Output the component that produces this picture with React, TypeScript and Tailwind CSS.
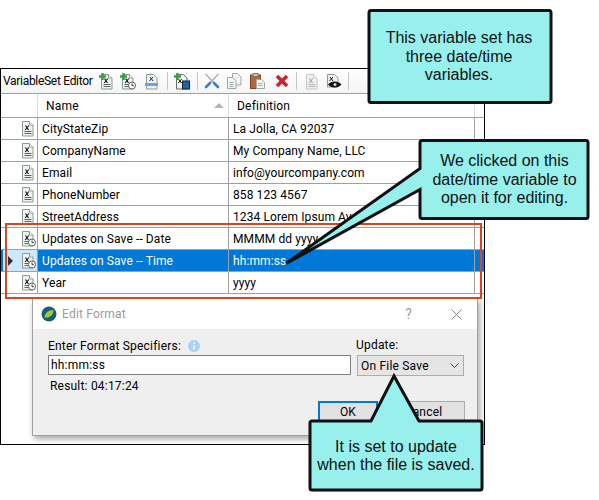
import React from "react";

const uiFont = "font-['Roboto','Noto_Sans',sans-serif]";

// Document glyph shared by the rows and the toolbar
function VarDoc({ clock = false, plus = false, faded = false }: { clock?: boolean; plus?: boolean; faded?: boolean }) {
  const line = faded ? "#b8b8b8" : "#5a6460";
  return (
    <svg width="16" height="17" viewBox="0 0 16 17" className="shrink-0">
      <path d="M2.5 1.5h7l3.500 3.500v11h-10.500z" fill={faded ? "#f0f0f0" : "#eef3f1"} stroke={faded ? "#c8c8c8" : "#8c9a96"} />
      <path d="M9.500 1.500v3.500h3.500" fill="#fff" stroke={faded ? "#c8c8c8" : "#8c9a96"} />
      <path d="M5.500 5.500l3 4.500M8.800 5.500l-3.600 4.500" stroke={faded ? "#aaa" : "#111"} strokeWidth="1.100" fill="none" />
      <path d="M4.500 11.500h7M4.500 13.500h7" stroke={line} />
      {clock && (
        <g>
          <circle cx="12" cy="12.500" r="3.500" fill="#fff" stroke="#5a6460" />
          <path d="M12 10.500v2.200h1.800" stroke="#333" fill="none" />
        </g>
      )}
      {plus && <path d="M3.500 0v7M0 3.500h7" stroke="#2fa53a" strokeWidth="2.400" />}
    </svg>
  );
}

function Sep() {
  return <div className="w-px h-[18px] bg-[#c4c4c4] shrink-0" />;
}

function Toolbar() {
  return (
    <div className="flex items-center h-[25px] bg-gradient-to-b from-white to-[#f4f4f4] border-b border-[#a0a0a0] pl-[2px]">
      <span className="text-[12px] text-black w-[96px] shrink-0 whitespace-nowrap tracking-[-0.3px]">VariableSet Editor</span>
      <VarDoc plus />
      <div className="ml-[5px]">
        <VarDoc plus clock />
      </div>
      <svg width="16" height="17" viewBox="0 0 16 17" className="ml-[8px] shrink-0">
        <path d="M2.500 1.500h7l3.500 3.500v11h-10.500z" fill="#eef3f1" stroke="#8c9a96" />
        <path d="M6 4l3 4M9 4l-3.500 4" stroke="#222" fill="none" />
        <path d="M1 10h13v3h-13z" fill="#6ea4dc" />
      </svg>
      <div className="ml-[7px]">
        <Sep />
      </div>
      <svg width="16" height="17" viewBox="0 0 16 17" className="ml-[6px] shrink-0">
        <path d="M2.500 1.500h7l3.500 3.500v11h-10.500z" fill="#eef3f1" stroke="#66716e" />
        <path d="M4.500 6l3 4M7.800 6l-3.600 4" stroke="#111" fill="none" />
        <path d="M3.500 0v7M0 3.500h7" stroke="#2fa53a" strokeWidth="2.400" />
        <rect x="8.500" y="8" width="7" height="8" fill="#1f63a8" stroke="#123" />
      </svg>
      <div className="ml-[7px]">
        <Sep />
      </div>
      <svg width="16" height="16" viewBox="0 0 16 16" className="ml-[6px] shrink-0">
        <path d="M1.500 1l9 9.500M14.500 1l-9 9.500" stroke="#a8b0b8" strokeWidth="1.400" />
        <path d="M10 10l4 4M6 10l-4 4" stroke="#3d7fc4" strokeWidth="2.600" strokeLinecap="round" />
      </svg>
      <svg width="15" height="16" viewBox="0 0 15 16" className="ml-[7px] shrink-0">
        <path d="M5.500 .500h5l3.500 3.500v8h-8.500z" fill="#f2f6f5" stroke="#9caaa7" />
        <path d="M.500 4.500h5l3.500 3v8h-8.500z" fill="#f2f6f5" stroke="#9caaa7" />
        <path d="M2.500 9.500h4M2.500 11.500h4M2.500 13.500h4" stroke="#9caaa7" />
      </svg>
      <svg width="15" height="16" viewBox="0 0 15 16" className="ml-[8px] shrink-0">
        <rect x=".5" y="2" width="10" height="13.500" fill="#b4683a" stroke="#7d4523" />
        <rect x="3" y=".5" width="5" height="3" fill="#c9c9c9" stroke="#777" />
        <path d="M6.500 6.500h5l3 3v6h-8z" fill="#f4f7f6" stroke="#9caaa7" />
        <path d="M8 10.500h4.500M8 12.500h4.500" stroke="#9caaa7" />
      </svg>
      <svg width="14" height="14" viewBox="0 0 14 14" className="ml-[10px] shrink-0">
        <path d="M2 2l10 10M12 2l-10 10" stroke="#c8242b" strokeWidth="3.600" />
      </svg>
      <div className="ml-[7px]">
        <Sep />
      </div>
      <div className="ml-[7px]">
        <VarDoc faded />
      </div>
      <svg width="17" height="17" viewBox="0 0 17 17" className="ml-[5px] shrink-0">
        <path d="M2.500 1.500h7l3.500 3.500v9h-10.500z" fill="#eef3f1" stroke="#8c9a96" />
        <path d="M5 4l3 4M8 4l-3.500 4" stroke="#111" fill="none" />
        <path d="M3 11.500c3-4 10-4 13.500 0c-3.500 4-10.500 4-13.500 0z" fill="#111" />
        <circle cx="10" cy="11.500" r="1.500" fill="#ddd" />
      </svg>
      <div className="ml-[6px]">
        <Sep />
      </div>
    </div>
  );
}

type Row = { name: string; def: string; clock?: boolean; selected?: boolean };

const rows: Row[] = [
  { name: "CityStateZip", def: "La Jolla, CA 92037" },
  { name: "CompanyName", def: "My Company Name, LLC" },
  { name: "Email", def: "info@yourcompany.com" },
  { name: "PhoneNumber", def: "858 123 4567" },
  { name: "StreetAddress", def: "1234 Lorem Ipsum Ave." },
  { name: "Updates on Save -- Date", def: "MMMM dd yyyy", clock: true },
  { name: "Updates on Save -- Time", def: "hh:mm:ss", clock: true, selected: true },
  { name: "Year", def: "yyyy", clock: true },
];

function GridRow({ row }: { row: Row }) {
  return (
    <div className={`flex h-[22px] border-b border-[#a0a0a0] text-[12px] ${row.selected ? "bg-[#0078d7] text-white" : "bg-white text-black"}`}>
      <div className={`relative flex items-center justify-end shrink-0 pr-[1px] border-r border-[#a0a0a0] ${row.selected ? "bg-[#cce8ff] ml-[2px] w-[35px]" : "bg-white w-[37px]"}`}>
        {row.selected && <div className="absolute left-[5px] top-[6px] border-y-[5px] border-y-transparent border-l-[5px] border-l-[#333]" />}
        <VarDoc clock={row.clock} />
      </div>
      <div className="flex items-center w-[191px] shrink-0 pl-[4px] border-r border-[#a0a0a0] tracking-[0.1px]">{row.name}</div>
      <div className="flex items-center w-[246px] shrink-0 pl-[4px] border-r border-[#a0a0a0] tracking-[0.1px]">{row.def}</div>
    </div>
  );
}

function VarGrid() {
  return (
    <div>
      <div className="flex h-[24px] border-b border-[#a0a0a0] text-[12px] text-black tracking-[0.2px]">
        <div className="w-[37px] shrink-0 border-r border-[#d9d9d9]" />
        <div className="flex items-center justify-between w-[191px] shrink-0 pl-[8px] pr-[4px] border-r border-[#d9d9d9]">
          <span>Name</span>
          <div className="border-x-[5px] border-x-transparent border-b-[5px] border-b-[#b5b5b5]" />
        </div>
        <div className="flex items-center w-[246px] shrink-0 pl-[8px] border-r border-[#d9d9d9]">Definition</div>
      </div>
      {rows.map((r) => (
        <GridRow key={r.name} row={r} />
      ))}
    </div>
  );
}

function EditFormatDialog() {
  return (
    <div className="absolute left-[31px] top-[229px] w-[446px] h-[138px] border border-[#a0a0a0] bg-[#efefef] shadow-[2px_3px_6px_rgba(0,0,0,0.35)] text-[12px] text-black tracking-[0.2px]">
      <div className="flex items-center h-[30px] bg-white pl-[8px] pr-[15px]">
        <svg width="16" height="16" viewBox="0 0 16 16" className="shrink-0">
          <circle cx="8" cy="8" r="7.500" fill="#14607a" />
          <path d="M3.500 11.500c0-4.500 4-7.500 9-7.500c0 4.500-3.500 8.500-9 7.500z" fill="#a8c83c" />
        </svg>
        <span className="ml-[5px] text-[#9a9a9a]">Edit Format</span>
        <span className="ml-auto text-[14px] text-[#9a9a9a]">?</span>
        <svg width="11" height="11" viewBox="0 0 11 11" className="ml-[39px]">
          <path d="M.5.5l10 10M10.500.5l-10 10" stroke="#8a8a8a" fill="none" />
        </svg>
      </div>
      <div className="flex pl-[15px] pt-[8px] pr-[12px]">
        <div className="w-[303px] shrink-0">
          <div className="flex items-center h-[17px]">
            <span>Enter Format Specifiers:</span>
            <svg width="12" height="12" viewBox="0 0 12 12" className="ml-[7px]">
              <circle cx="6" cy="6" r="6" fill="#a9d2f7" />
              <path d="M6 2.500v1.500M6 5.500v4" stroke="#fff" strokeWidth="1.600" />
            </svg>
          </div>
          <div className="flex items-center h-[20px] mt-[1px] border border-[#808080] bg-white pl-[2px]">hh:mm:ss</div>
          <div className="mt-[2px] pl-[2px]">Result: 04:17:24</div>
        </div>
        <div className="ml-[6px] w-[107px]">
          <div className="h-[17px] leading-[17px] -ml-[1px]">Update:</div>
          <div className="flex items-center justify-between h-[21px] mt-[1px] border border-[#adadad] bg-[#e5e5e5] px-[3px]">
            <span>On File Save</span>
            <svg width="9" height="6" viewBox="0 0 9 6" className="mr-[1px]">
              <path d="M.5.5l4 4l4-4" stroke="#444" fill="none" />
            </svg>
          </div>
        </div>
      </div>
      <div className="flex justify-end gap-[4px] pr-[12px] mt-[6px]">
        <div className="flex items-center justify-center w-[60px] h-[22px] border-2 border-[#0078d7] bg-[#e1e1e1]">OK</div>
        <div className="flex items-center justify-center w-[83px] h-[22px] border border-[#adadad] bg-[#e1e1e1]">Cancel</div>
      </div>
    </div>
  );
}

// Callout shape is a drawing: the outline includes the tail, so it stays one stroke
function Callout({ left, top, width, height, d, children }: { left: number; top: number; width: number; height: number; d: string; children: React.ReactNode }) {
  return (
    <>
      <svg className="absolute left-0 top-0 w-[599px] h-[500px]" viewBox="0 0 599 500">
        <path d={d} fill="#000" opacity="0.18" transform="translate(1 1.500)" />
        <path d={d} fill="#97f0ec" stroke="#111" strokeWidth="3" strokeLinejoin="miter" strokeMiterlimit="6" />
      </svg>
      <div
        className="absolute flex items-center justify-center text-center text-[16px] leading-[18.500px] text-[#111] font-['Liberation_Sans',Arial,sans-serif]"
        style={{ left, top, width, height }}
      >
        {children}
      </div>
    </>
  );
}

export default function App() {
  return (
    <div className="relative w-[599px] h-[500px] bg-white overflow-hidden">
      <div className="pt-[68px]">
        <div className={`relative w-[485px] h-[377px] border border-black bg-white ${uiFont}`}>
          <Toolbar />
          <VarGrid />
          <EditFormatDialog />
        </div>
      </div>

      {/* red highlight over the date/time rows */}
      <div className="absolute left-[5px] top-[223px] w-[477px] h-[76px] border-2 border-[#e2401f]" />

      <Callout
        left={369}
        top={11}
        width={182}
        height={91}
        d="M371 10.500h178a2 2 0 0 1 2 2v88a2 2 0 0 1 -2 2h-178a2 2 0 0 1 -2 -2v-88a2 2 0 0 1 2 -2z"
      >
        <div className="mt-[1px] -ml-[2px]">
          This variable set has
          <br />
          three date/time
          <br />
          variables.
        </div>
      </Callout>

      <Callout
        left={421}
        top={141}
        width={167}
        height={77}
        d="M422 140.500h164a2 2 0 0 1 2 2v74a2 2 0 0 1 -2 2h-164a2 2 0 0 1 -2 -2v-27l-134 74l134 -95v-26a2 2 0 0 1 2 -2z"
      >
        <div className="mt-[1px]">
          We clicked on this
          <br />
          date/time variable to
          <br />
          open it for editing.
        </div>
      </Callout>

      <Callout
        left={312}
        top={422}
        width={168}
        height={66}
        d="M312 421h59l23 -45l25 45h61a2 2 0 0 1 2 2v65a2 2 0 0 1 -2 2h-168a2 2 0 0 1 -2 -2v-65a2 2 0 0 1 2 -2z"
      >
        <div className="mt-[2px]">
          It is set to update
          <br />
          when the file is saved.
        </div>
      </Callout>
    </div>
  );
}
